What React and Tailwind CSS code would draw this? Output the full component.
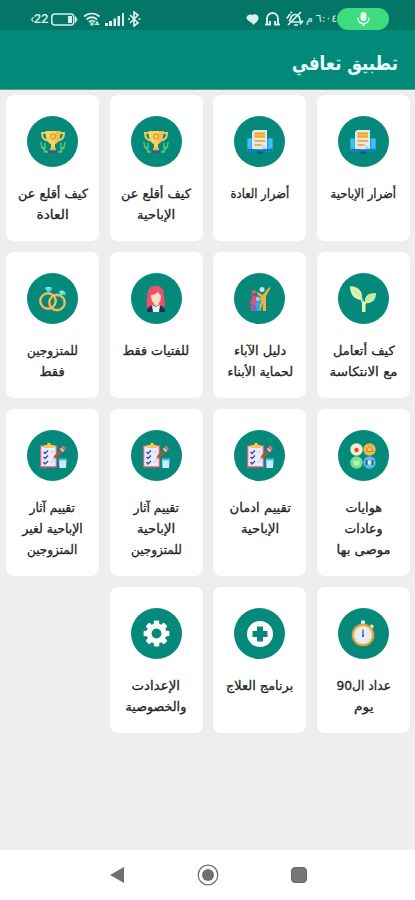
import React from "react";

function BookIcon() {
  return (
    <svg width="26" height="26" viewBox="0 0 26 26">
      <path d="M.5 9.500h25v13H.5z" fill="#1f9fe0" />
      <path d="M.5 9.500h4v12h-4zM21.500 9.500h4v12h-4z" fill="#46bdf3" />
      <path d="M.5 19.500l12.500 1.500 12.500-1.500v3H.5z" fill="#0c7fbd" />
      <path d="M10 22.500h6.500l-1 2.500h-4.500z" fill="#124d78" />
      <path d="M5 3l2-2H20v19H5z" fill="#dfeaf1" />
      <path d="M7.500 4.500H18M7.500 7.500H18" stroke="#f9a51c" strokeWidth="2.600" />
      <path d="M7.500 12H18M7.500 16h7" stroke="#f0b040" strokeWidth="2" />
      <path d="M15.500 15.500L20 20h-4.500z" fill="#bccdd8" />
    </svg>
  );
}

function TrophyIcon() {
  return (
    <svg width="26" height="24" viewBox="0 0 26 24">
      <path d="M7 3H2c0 5 2 7.500 7 7.500M19 3h5c0 5-2 7.500-7 7.500" fill="none" stroke="#eecb62" strokeWidth="2" />
      <path d="M5.500 1h15c0 7-2 12-5.500 13v5h-4v-5C7.500 13 5.500 8 5.500 1z" fill="#fbd35f" />
      <path d="M15.500 1h5c0 7-2 12-5.500 13z" fill="#f3bf4c" />
      <circle cx="13" cy="6.500" r="2.400" fill="none" stroke="#d99a35" strokeWidth="1.200" />
      <path d="M10 18h6v2.500h-6z" fill="#ecb145" />
      <path d="M9 20.500h8V23H9z" fill="#40568f" />
      <path d="M1 12c0 5 2 8 6 10M25 12c0 5-2 8-6 10M1 17l4 1 0-5M25 17l-4 1 0-5M4 22l4 0M22 22l-4 0" fill="none" stroke="#54c978" strokeWidth="1.500" />
    </svg>
  );
}

function SproutIcon() {
  return (
    <svg width="26" height="28" viewBox="0 0 26 28">
      <path d="M0 1c9 1 13 5 12 14C5 15 0 10 0 1z" fill="#d8f5b1" />
      <path d="M26 8c-8 0-12 3-11 10 7 1 11-3 11-10z" fill="#c9ef9f" />
      <path d="M4 5c5 4 9 8 10 13v9M22 11c-5 3-7 6-8 10" fill="none" stroke="#b4de85" strokeWidth="1" />
      <path d="M12 27V18l-2-4 4 3 3-1-1.500 4v7z" fill="#dff6bd" />
    </svg>
  );
}

function FamilyIcon() {
  return (
    <svg width="22" height="26" viewBox="0 0 22 26">
      <circle cx="5" cy="6" r="2" fill="#ee5b70" />
      <path d="M1 3l2 6 5 1 3-3-2 7 1 4-3 1v6H2v-6L1 17l2-5z" fill="#da4e79" />
      <circle cx="13" cy="3.500" r="2.500" fill="#cbe4ed" />
      <path d="M20.500 1l1 1-4.500 8v15h-3l-.5-8-2 8h-1l1-14-4-4 1-1 5 3z" fill="#f0b33f" />
      <circle cx="9" cy="13" r="2.200" fill="#8bd1f5" />
      <path d="M5 17l4-1 4-2-2 5v6H6v-5z" fill="#32abdf" />
      <path d="M3 19h4l1 6H3z" fill="#965cc1" />
    </svg>
  );
}

function GirlIcon() {
  return (
    <svg width="20" height="27" viewBox="0 0 20 27">
      <path d="M1 23C0 18 1 12 2 6 4 1 8 0 12 1c5 1 6 6 6 11l1 8-2 3z" fill="#ef5169" />
      <path d="M1 27c0-5 3-6 7-7h4c4 1 7 2 7 7z" fill="#263044" />
      <path d="M6 20l4 2 4-2-1 7H7z" fill="#e7f4fb" />
      <path d="M8 16h5v4l-2.500 2L8 20z" fill="#f6caa7" />
      <path d="M5 10c4 0 5-2 7-3l3 4c0 5-2 8-5 8s-5-4-5-9z" fill="#ffdfc4" />
    </svg>
  );
}

function RingsIcon() {
  return (
    <svg width="27" height="26" viewBox="0 0 27 26">
      <g fill="none" stroke="#dba94b" strokeWidth="2.600">
        <circle cx="9" cy="15" r="7.600" />
        <circle cx="18" cy="16.500" r="7.600" />
      </g>
      <g fill="none" stroke="#f8d275" strokeWidth=".9">
        <circle cx="9" cy="15" r="8" />
        <circle cx="18" cy="16.500" r="8" />
      </g>
      <path d="M5.500 2l2-1h5l1 2-4 4z" fill="#55cde5" />
      <path d="M20 5l3-1 3.500 2 0 3-6 0z" fill="#55cde5" />
      <path d="M8 1h3l-2 3zM22 5l3 1-3 2z" fill="#a0edf4" />
    </svg>
  );
}

function HobbiesIcon() {
  return (
    <svg width="26" height="26" viewBox="0 0 26 26">
      <circle cx="6.500" cy="6.500" r="6.200" fill="#f6edcc" />
      <circle cx="19.500" cy="6.500" r="6.200" fill="#f1b849" />
      <circle cx="6.500" cy="19.500" r="6.200" fill="#79df91" />
      <circle cx="19.500" cy="19.500" r="6.200" fill="#61b9e5" />
      <circle cx="6.500" cy="7" r="2.200" fill="#dd4852" />
      <path d="M16.500 8.500l1-3 2-2 2 2 1.500 3h-6.500z" fill="#f6cb6c" stroke="#cf7d32" strokeWidth="1" />
      <path d="M3.500 17l3 1.500 3-1.500v4l-3 2-3-2z" fill="#b5f5b3" />
      <path d="M16.500 17v5M22.500 17v5" stroke="#245a8b" strokeWidth="1.600" />
      <path d="M18 17.500h3v4h-3z" fill="#dbeafa" />
    </svg>
  );
}

function ChecklistIcon() {
  return (
    <svg width="28" height="27" viewBox="0 0 28 27">
      <rect x="1" y="3" width="17" height="22.500" rx="1" fill="#e95f76" />
      <path d="M2.300 4.500h14.400v19.700H2.300z" fill="#e7ecff" />
      <path d="M5 3h3c0-3 4-3 4 0h3v3H5z" fill="#f8c74e" />
      <path d="M4.500 10l1.500 1.500 3-3M4.500 15l1.500 1.500 3-3M4.500 20l1.500 2 3-3" fill="none" stroke="#434b9e" strokeWidth="1.400" />
      <path d="M11 10h4M11 20h4" stroke="#bdcaec" />
      <path d="M14 18l1-4 7.500-8 2.500 2.500-7 7.500z" fill="#a5593b" />
      <path d="M22 6l2-2.500 3 2.500-2 3z" fill="#ee6680" />
      <path d="M21 7l1-1 3 3-1 1z" fill="#e8ecf4" />
      <path d="M14 18l1-3 2 2z" fill="#ffd4a4" />
      <path d="M20 17h7.500l-.5 9h-6.500z" fill="#c5efff" />
      <path d="M20 16.500h7.500v2H20z" fill="#59b9e9" />
    </svg>
  );
}

function StopwatchIcon() {
  return (
    <svg width="24" height="27" viewBox="0 0 24 27">
      <path d="M10 .5h4V5h-4zM20 4l3 2-2 3-2-2z" fill="#dfe6e9" />
      <circle cx="12" cy="15" r="10.200" fill="#e8edfa" stroke="#eda52c" strokeWidth="2.200" />
      <circle cx="12" cy="15" r="7.800" fill="none" stroke="#c3cbdb" strokeWidth="1" strokeDasharray="1 3" />
      <path d="M12 9.500v7" stroke="#4b506b" strokeWidth="1.300" />
      <circle cx="12" cy="16" r="1" fill="#4b506b" />
    </svg>
  );
}

function MedicalIcon() {
  return (
    <svg width="26" height="26" viewBox="0 0 26 26">
      <circle cx="13" cy="13" r="13" fill="#fff" />
      <path d="M10 5.500h6V10h4.500v6H16v4.500h-6V16H5.500v-6H10z" fill="#05897a" />
    </svg>
  );
}

function GearIcon() {
  return (
    <svg width="27" height="27" viewBox="0 0 27 27">
      <g fill="#fff">
        {[0, 45, 90, 135].map((a) => (
          <rect key={a} x="10.8" y=".6" width="5.400" height="25.800" rx="1.200" transform={`rotate(${a} 13.5 13.5)`} />
        ))}
        <circle cx="13.500" cy="13.500" r="10" />
      </g>
      <circle cx="13.500" cy="13.500" r="4.900" fill="#05897a" />
    </svg>
  );
}

const cards = [
  { icon: BookIcon, lines: [["أضرار الإباحية", 66]] },
  { icon: BookIcon, lines: [["أضرار العادة", 59]] },
  { icon: TrophyIcon, lines: [["كيف أقلع عن", 70], ["الإباحية", 38]] },
  { icon: TrophyIcon, lines: [["كيف أقلع عن", 70], ["العادة", 32]] },
  { icon: SproutIcon, lines: [["كيف أتعامل", 62], ["مع الانتكاسة", 68]] },
  { icon: FamilyIcon, lines: [["دليل الآباء", 52], ["لحماية الأبناء", 66]] },
  { icon: GirlIcon, lines: [["للفتيات فقط", 67]] },
  { icon: RingsIcon, lines: [["للمتزوجين", 51], ["فقط", 25]] },
  { icon: HobbiesIcon, lines: [["هوايات", 37], ["وعادات", 38], ["موصى بها", 54]] },
  { icon: ChecklistIcon, lines: [["تقييم ادمان", 61], ["الإباحية", 38]] },
  { icon: ChecklistIcon, lines: [["تقييم آثار", 45], ["الإباحية", 38], ["للمتزوجين", 51]] },
  { icon: ChecklistIcon, lines: [["تقييم آثار", 45], ["الإباحية لغير", 61], ["المتزوجين", 50]] },
  { icon: StopwatchIcon, lines: [["عداد ال90", 55], ["يوم", 20]] },
  { icon: MedicalIcon, lines: [["برنامج العلاج", 67]] },
  { icon: GearIcon, lines: [["الإعدادت", 48], ["والخصوصية", 61]] },
];

// Keeps a label on one line, condensed horizontally to the given width.
function FitText({ children, width, className = "" }) {
  const ref = React.useRef(null);
  const [scale, setScale] = React.useState(1);
  React.useLayoutEffect(() => {
    setScale(width / ref.current.offsetWidth);
  }, [width]);
  return (
    <span className={`flex justify-center whitespace-nowrap ${className}`} style={{ width }}>
      <span ref={ref} className="shrink-0" style={{ transform: `scaleX(${scale})` }}>
        {children}
      </span>
    </span>
  );
}

function Card({ icon: Icon, lines }) {
  return (
    <article className="flex flex-col items-center rounded-lg bg-white pt-[21px]">
      <div className="flex size-[51px] items-center justify-center rounded-full bg-[#05897a]">
        <Icon />
      </div>
      <h2 className="mt-[16px] flex flex-col items-center text-[12.5px] leading-[21px] text-[#252525] [-webkit-text-stroke:0.3px_#252525]">
        {lines.map(([text, width]) => (
          <FitText key={text} width={width}>{text}</FitText>
        ))}
      </h2>
    </article>
  );
}

function StatusBar() {
  return (
    <div dir="ltr" className="flex h-[30px] items-center bg-[#047667] pt-2 text-[#d9f0eb]">
      <span className="ml-[26px] w-[22px] text-right font-['Roboto'] text-[13px] leading-4 font-medium tracking-tight">‹22</span>
      <svg className="ml-[3px]" width="27" height="13" viewBox="0 0 27 13">
        <rect x=".8" y="1" width="22" height="11" rx="3" fill="none" stroke="currentColor" strokeWidth="1.500" />
        <path d="M17 3h4v7h-4zM24 2.500l2.500 4L24 10.500z" fill="currentColor" />
      </svg>
      <svg className="ml-[5px]" width="18" height="14" viewBox="0 0 18 14" fill="none" stroke="currentColor" strokeWidth="1.700">
        <path d="M1 4.500c4.500-4 11-4 15.500 0M3.500 7.500c3.500-3 7-3 10.500 0M6 10c2-1.800 4-1.800 6 0" />
        <path d="M8 11h2v2H8zM12.500 12.500l1.500-2.500 1.500 2.500z" strokeWidth="1.200" />
      </svg>
      <svg className="ml-[4px]" width="20" height="13" viewBox="0 0 20 13" fill="currentColor">
        <path d="M0 10h3v3H0zM4 8h3v5H4zM8.500 5.500H11V13H8.500zM12.500 3H15v10h-2.500zM17 0h2v13h-2z" />
      </svg>
      <svg className="ml-[3px]" width="13" height="16" viewBox="0 0 13 16" fill="none" stroke="currentColor" strokeWidth="1.700">
        <path d="M2 4l8 8-4 3V1l4 3-8 8M0 8h2M10.500 8h2" />
      </svg>
      <svg className="ml-[105px]" width="13" height="13" viewBox="0 0 13 13" fill="currentColor">
        <path d="M6.500 2C8 .5 12 1 12.500 4.500c.3 3-3 5-5 7.500C6 9 1 8 .5 5 .3 2 4 .5 6.500 2z" />
      </svg>
      <svg className="ml-[6px]" width="15" height="14" viewBox="0 0 15 14" fill="none" stroke="currentColor" strokeWidth="1.900">
        <path d="M2 12.500V6.500a5.500 5.500 0 0 1 11 0v6M0 12.500h5V9M15 12.500h-5V9" />
      </svg>
      <svg className="ml-[6px]" width="18" height="16" viewBox="0 0 18 16" fill="none" stroke="currentColor" strokeWidth="1.700">
        <path d="M3 10.500c2-1 1-5 4-6.500 2.500-1 4.500-.5 6 1.500 1 2 .5 4 2 5.500H6M8 14h4" />
        <path d="M2 14L15 1M.8 7.500L4 3M4.500 2l1.500-1M14 13.500l3-4" />
      </svg>
      <span className="ml-[2px] flex w-[31px] items-center gap-[3px] font-['DejaVu_Sans',sans-serif] text-[11px] leading-4">
        <span>م</span>
        <span className="w-[20px] tracking-[-1px] whitespace-nowrap">٦:٠٤</span>
      </span>
      <span className="flex h-[22px] w-[52px] items-center justify-center rounded-full bg-[#3ddc7e]">
        <svg width="13" height="14" viewBox="0 0 13 14" fill="#e7fff0">
          <rect x="3.500" y="0" width="6" height="9" rx="3" />
          <path d="M1 5.500c0 4 2 6 5.500 6s5.500-2 5.500-6" fill="none" stroke="#e7fff0" strokeWidth="1.400" />
          <path d="M5.500 11h2v3h-2z" />
        </svg>
      </span>
    </div>
  );
}

export default function App() {
  return (
    <div dir="rtl" className="flex h-[900px] w-[415px] flex-col overflow-hidden bg-[#eeeeee] font-['DejaVu_Sans',sans-serif]">
      <StatusBar />
      <header className="flex h-[60px] items-center border-b border-[#5c9d96] bg-[#03897a] pt-[7px] pr-[17px] text-[20px] font-bold text-[#e8fffb]">
        <FitText width={106}>تطبيق تعافي</FitText>
      </header>
      <main className="grid grid-cols-4 grid-rows-[146px_146px_167px_146px] gap-x-[10.6px] gap-y-[11px] pt-[5px] pr-[5px] pl-[6px]">
        {cards.map((card, i) => (
          <Card key={i} {...card} />
        ))}
      </main>
      <nav dir="ltr" className="mt-auto grid h-[50px] grid-cols-3 items-center bg-white pr-[71px] pl-[72px]">
        <svg className="ml-[37px]" width="16" height="18" viewBox="0 0 16 18">
          <path d="M1 9L15 1v16z" fill="#707070" />
        </svg>
        <svg className="mx-auto" width="22" height="22" viewBox="0 0 22 22">
          <circle cx="11" cy="11" r="9.800" fill="none" stroke="#6e6e6e" strokeWidth="1.300" />
          <circle cx="11" cy="11" r="6" fill="#707070" />
        </svg>
        <span className="ml-auto mr-[37px] size-[16px] rounded-sm border border-[#666] bg-[#777]" />
      </nav>
    </div>
  );
}
